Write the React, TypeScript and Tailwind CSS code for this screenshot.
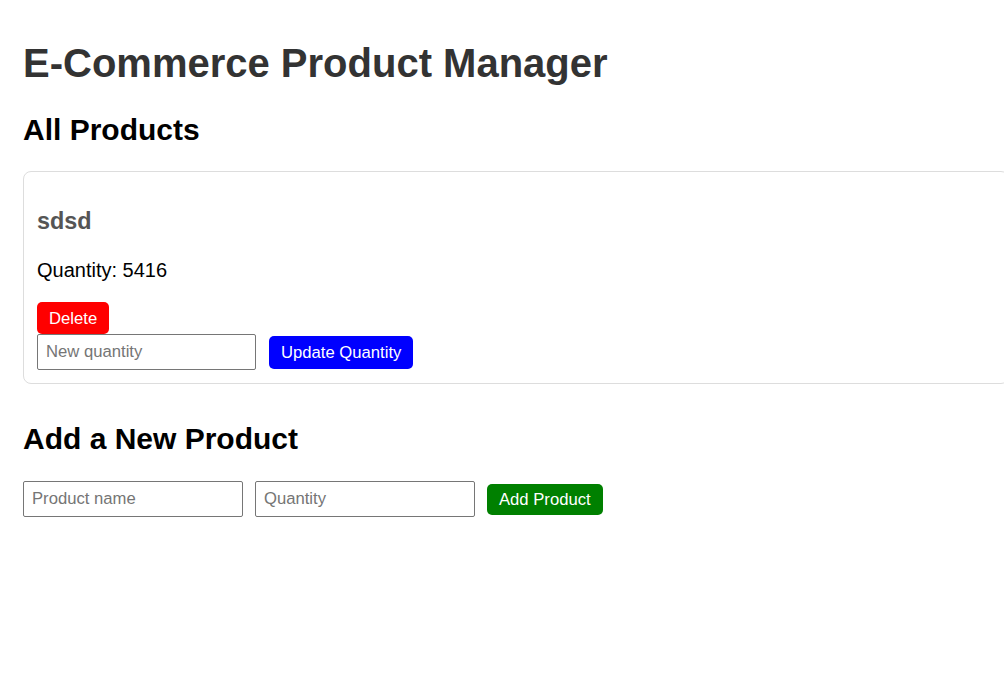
import React, { useState } from "react";

interface Product {
  id: string;
  name: string;
  quantity: number;
}

export default function App() {
  const [products] = useState<Product[]>([
    { id: "1", name: "sdsd", quantity: 5416 },
  ]);

  return (
    <div className="min-h-screen overflow-hidden bg-white px-[23px] pt-[40px] font-['Liberation_Sans',Arial,sans-serif] text-black">
      <h1 className="text-[40px] leading-[46px] font-bold text-[#333]">
        E-Commerce Product Manager
      </h1>

      <h2 className="mt-[27px] text-[30px] leading-[34px] font-bold">
        All Products
      </h2>

      {products.map((p) => (
        <div
          key={p.id}
          className="mt-[24px] w-[986px] max-w-none rounded-[8px] border border-[#dddddd] px-[13px] pt-[36px] pb-[13px]"
        >
          <h3 className="text-[23.4px] leading-[27px] font-bold text-[#555]">
            {p.name}
          </h3>
          <p className="mt-[23px] text-[20px] leading-[24px]">
            Quantity: {p.quantity}
          </p>
          <div className="mt-[20px]">
            <button className="h-[32px] rounded-[5px] bg-[#ff0000] px-[12px] text-[16.67px] leading-[19px] text-white">
              Delete
            </button>
          </div>
          <div className="flex items-center">
            <input
              type="number"
              placeholder="New quantity"
              className="h-[36px] w-[219px] rounded-[2px] border border-[#767676] px-[8px] text-[16.67px] placeholder:text-[#757575]"
            />
            <button className="ml-[13px] h-[33px] rounded-[5px] bg-[#0000ff] px-[12px] text-[16.67px] leading-[19px] text-white">
              Update Quantity
            </button>
          </div>
        </div>
      ))}

      <h2 className="mt-[38px] text-[30px] leading-[34px] font-bold">
        Add a New Product
      </h2>

      <div className="mt-[25px] flex items-center gap-[12px]">
        <input
          placeholder="Product name"
          className="h-[36px] w-[220px] rounded-[2px] border border-[#767676] px-[8px] text-[16.67px] placeholder:text-[#757575]"
        />
        <input
          type="number"
          placeholder="Quantity"
          className="h-[36px] w-[220px] rounded-[2px] border border-[#767676] px-[8px] text-[16.67px] placeholder:text-[#757575]"
        />
        <button className="h-[31px] rounded-[5px] bg-[#008000] px-[12px] text-[16.67px] leading-[19px] text-white">
          Add Product
        </button>
      </div>
    </div>
  );
}
